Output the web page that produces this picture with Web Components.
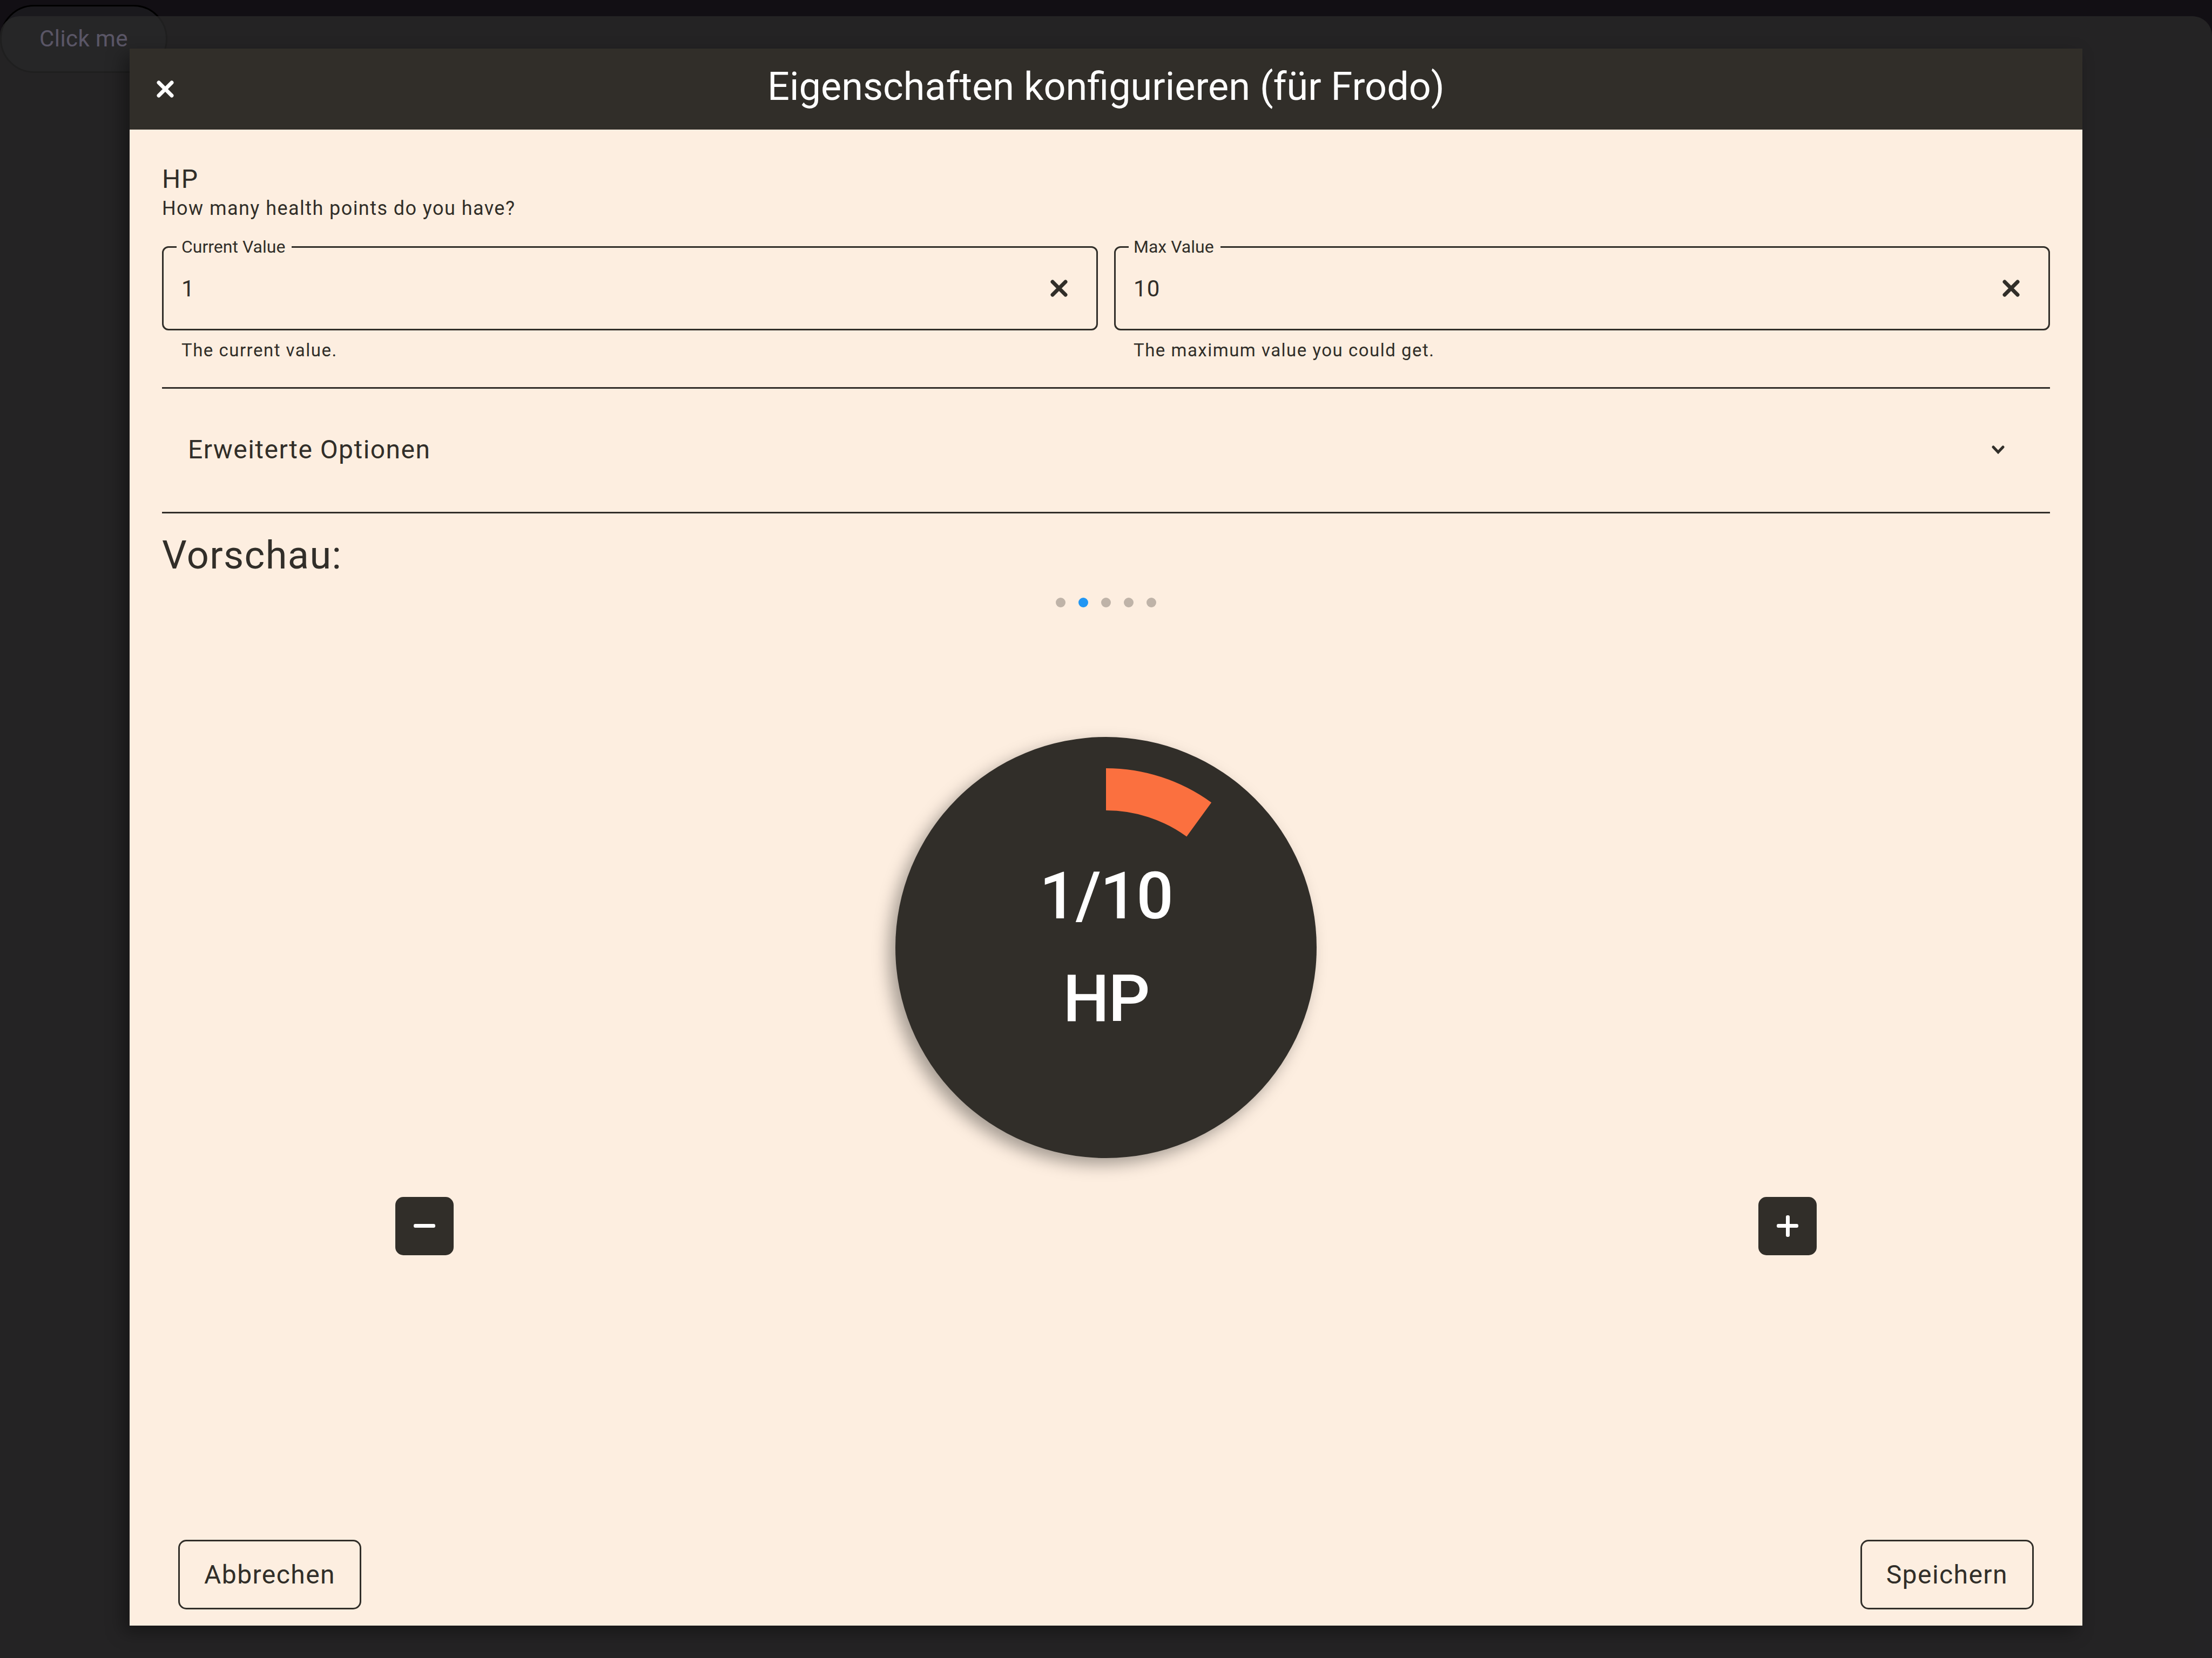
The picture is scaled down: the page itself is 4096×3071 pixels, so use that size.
<!DOCTYPE html>
<html lang="de">
<head>
<meta charset="utf-8">
<title>Eigenschaften konfigurieren</title>
<style>
  :root {
    --ink: #312e29;
    --paper: #fdeee0;
    --accent: #fb703f;
    --active: #2196f3;
    --idle: #bfb3a8;
    --drop: -12px 12px 30px rgba(0, 0, 0, .35);
  }
  html, body { margin: 0; background: #120f14; }
  body { font-family: Roboto, "Liberation Sans", sans-serif; color: var(--ink); }
</style>
</head>
<body>
<app-stage>
  <click-button slot="trigger">Click me</click-button>
  <config-dialog>
    <span slot="title">Eigenschaften konfigurieren (für Frodo)</span>
    <stat-heading>
      <span slot="name">HP</span>
      <span slot="hint">How many health points do you have?</span>
    </stat-heading>
    <field-row>
      <outlined-field label="Current Value" value="1">The current value.</outlined-field>
      <outlined-field label="Max Value" value="10">The maximum value you could get.</outlined-field>
    </field-row>
    <expand-panel>Erweiterte Optionen</expand-panel>
    <preview-title>Vorschau:</preview-title>
    <page-dots count="5" active="1"></page-dots>
    <stat-dial value="1" max="10">HP</stat-dial>
    <stat-stepper></stat-stepper>
    <outline-button slot="actions">Abbrechen</outline-button>
    <outline-button slot="actions">Speichern</outline-button>
  </config-dialog>
</app-stage>

<script>
const RESET = `
  *, *::before, *::after { box-sizing: border-box; }
  button, input { font: inherit; color: inherit; letter-spacing: inherit; background: none; border: 0; margin: 0; padding: 0; outline: 0; }
  button { cursor: pointer; }
  svg { display: block; }
`;
const CROSS = `<svg width="32" height="32" viewBox="0 0 32 32" fill="none" stroke="currentColor" stroke-width="7" stroke-linecap="round" aria-hidden="true"><path d="M4 4 28 28M28 4 4 28"/></svg>`;

class Base extends HTMLElement {
  constructor() {
    super();
    this.attachShadow({ mode: "open" });
  }
  connectedCallback() {
    this.shadowRoot.innerHTML = `<style>${RESET}${this.styles()}</style>${this.markup()}`;
  }
}

customElements.define("app-stage", class extends Base {
  styles() { return `
    :host { display: grid; min-height: 100vh; }
    .under, .sheet { grid-area: 1 / 1; }
    .under { padding-top: 9px; justify-self: start; }
    .sheet { margin-top: 30px; padding: 60px 240px; display: flex; border-radius: 36px 36px 0 0; background: rgba(43, 43, 43, .72); z-index: 1; }
  `; }
  markup() { return `<div class="under"><slot name="trigger"></slot></div><div class="sheet"><slot></slot></div>`; }
});

customElements.define("click-button", class extends Base {
  styles() { return `
    :host { display: block; }
    button { height: 126px; padding: 0 70px; border: 3px solid #000; border-radius: 63px; background: #1a191d; color: #d2c4ff; font-size: 42px; line-height: 60px; letter-spacing: .01em; }
  `; }
  markup() { return `<button type="button"><slot></slot></button>`; }
});

customElements.define("config-dialog", class extends Base {
  styles() { return `
    :host { display: flex; flex-direction: column; flex: 1; min-width: 0; background: var(--paper); box-shadow: var(--drop); }
    header { display: grid; grid-template-columns: 132px 1fr 132px; align-items: center; height: 150px; background: var(--ink); color: #fff; }
    header button { display: grid; place-items: center; height: 150px; }
    h1 { margin: 0; padding-bottom: 8px; font-size: 72px; line-height: 84px; font-weight: 400; text-align: center; }
    main { flex: 1; padding: 60px 60px 0; }
    footer { display: flex; justify-content: space-between; padding: 0 90px 30px; }
  `; }
  markup() { return `
    <header><button type="button" aria-label="Schließen">${CROSS}</button><h1><slot name="title"></slot></h1></header>
    <main><slot></slot></main>
    <footer><slot name="actions"></slot></footer>`; }
});

customElements.define("stat-heading", class extends Base {
  styles() { return `
    :host { display: block; }
    h2, p { margin: 0; font-weight: 400; }
    h2 { font-size: 48px; line-height: 64px; letter-spacing: .03em; }
    p { font-size: 36px; line-height: 44px; letter-spacing: .04em; }
  `; }
  markup() { return `<h2><slot name="name"></slot></h2><p><slot name="hint"></slot></p>`; }
});

customElements.define("field-row", class extends Base {
  styles() { return `
    :host { display: grid; grid-template-columns: 1fr 1fr; gap: 30px; margin-top: 30px; }
  `; }
  markup() { return `<slot></slot>`; }
});

customElements.define("outlined-field", class extends Base {
  styles() { return `
    :host { display: block; min-width: 0; }
    fieldset { margin: 0; min-width: 0; padding: 0 24px 18px; border: 3px solid var(--ink); border-radius: 12px; }
    legend { padding: 0 12px 0 9px; font-size: 32px; line-height: 39px; }
    .row { display: flex; height: 114px; }
    input { flex: 1; min-width: 0; padding-left: 9px; font-size: 42px; letter-spacing: .03em; }
    button { width: 90px; display: grid; place-items: center; }
    p { margin: 16px 36px 0; font-size: 33px; line-height: 42px; letter-spacing: .045em; }
  `; }
  markup() { return `
    <fieldset>
      <legend><label for="field">${this.getAttribute("label")}</label></legend>
      <div class="row">
        <input id="field" type="text" inputmode="numeric" value="${this.getAttribute("value")}" aria-describedby="help">
        <button type="button" aria-label="Leeren">${CROSS}</button>
      </div>
    </fieldset>
    <p id="help"><slot></slot></p>`; }
});

customElements.define("expand-panel", class extends Base {
  styles() { return `
    :host { display: block; margin-top: 47px; border: solid var(--ink); border-width: 3px 0; }
    button { display: flex; width: 100%; height: 228px; align-items: center; justify-content: space-between; padding: 0 84px 3px 48px; font-size: 48px; letter-spacing: .03em; }
  `; }
  markup() { return `<button type="button" aria-expanded="false"><slot></slot><svg width="24" height="16" viewBox="0 0 24 16" fill="none" stroke="currentColor" stroke-width="5" stroke-linecap="round" aria-hidden="true"><path d="M3 3 12 12.500 21 3"/></svg></button>`; }
});

customElements.define("preview-title", class extends Base {
  styles() { return `
    :host { display: block; margin-top: 36px; }
    h2 { margin: 0; font-size: 72px; line-height: 84px; font-weight: 400; letter-spacing: .02em; }
  `; }
  markup() { return `<h2><slot></slot></h2>`; }
});

customElements.define("page-dots", class extends Base {
  styles() { return `
    :host { display: flex; justify-content: center; gap: 24px; margin-top: 36px; }
    i { width: 18px; height: 18px; border-radius: 50%; background: var(--idle); }
    i.on { background: var(--active); }
  `; }
  markup() {
    const active = Number(this.getAttribute("active"));
    return Array.from({ length: Number(this.getAttribute("count")) }, (_, n) => `<i class="${n === active ? "on" : ""}"></i>`).join("");
  }
});

customElements.define("stat-dial", class extends Base {
  styles() { return `
    :host { display: grid; justify-content: center; margin-top: 240px; }
    .disc { display: grid; width: 780px; height: 780px; border-radius: 50%; background: var(--ink); box-shadow: var(--drop); }
    svg, .text { grid-area: 1 / 1; }
    .text { align-self: center; color: #fff; font-size: 121px; line-height: 190px; font-weight: 500; letter-spacing: -.015em; text-align: center; }
  `; }
  markup() {
    const value = Number(this.getAttribute("value")), max = Number(this.getAttribute("max"));
    const angle = 2 * Math.PI * value / max, r = 293;
    const x = 390 + r * Math.sin(angle), y = 390 - r * Math.cos(angle);
    return `<div class="disc">
      <svg width="780" height="780" viewBox="0 0 780 780" fill="none" aria-hidden="true"><path d="M390 ${390 - r}A${r} ${r} 0 0 1 ${x} ${y}" stroke="var(--accent)" stroke-width="78"/></svg>
      <div class="text"><div>${value}/${max}</div><div><slot></slot></div></div>
    </div>`;
  }
});

customElements.define("stat-stepper", class extends Base {
  styles() { return `
    :host { display: flex; justify-content: space-between; margin-top: 72px; padding: 0 432px; }
    button { display: grid; place-items: center; width: 108px; height: 108px; border-radius: 15px; background: var(--ink); color: #fff; }
  `; }
  markup() {
    const bar = `<rect x="0" y="16" width="40" height="7" rx="3"/>`;
    const post = `<rect x="17" y="0" width="7" height="40" rx="3"/>`;
    const icon = shapes => `<svg width="40" height="40" viewBox="0 0 40 40" fill="currentColor" aria-hidden="true">${shapes}</svg>`;
    return `<button type="button" aria-label="Weniger">${icon(bar)}</button><button type="button" aria-label="Mehr">${icon(bar + post)}</button>`;
  }
});

customElements.define("outline-button", class extends Base {
  styles() { return `
    :host { display: block; }
    button { height: 129px; padding: 0 45px; border: 3px solid var(--ink); border-radius: 15px; font-size: 48px; line-height: 56px; letter-spacing: .03em; }
  `; }
  markup() { return `<button type="button"><slot></slot></button>`; }
});
</script>
</body>
</html>
